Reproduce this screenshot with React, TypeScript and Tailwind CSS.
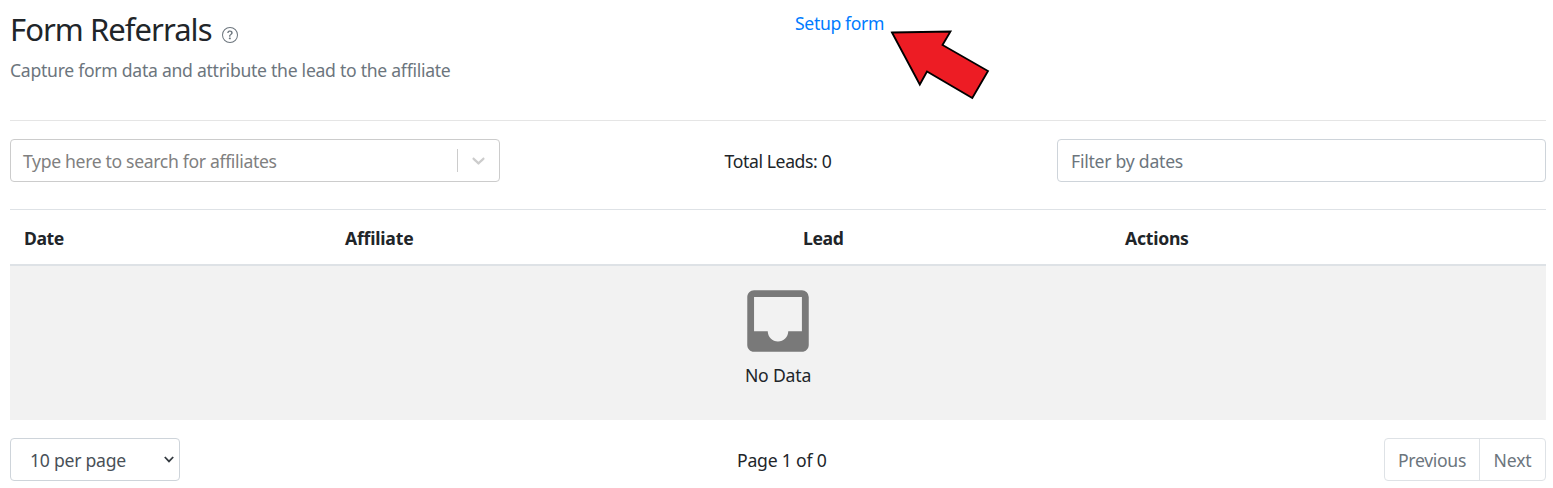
import { MdInbox } from "react-icons/md";

const columns = [
  { label: "Date", className: "w-[321px] tracking-[-0.45px]" },
  { label: "Affiliate", className: "w-[458px] tracking-[-0.2px]" },
  { label: "Lead", className: "w-[322px] tracking-[-0.4px]" },
  { label: "Actions", className: "flex-1 tracking-[-0.25px]" },
];

function HelpIcon() {
  return (
    <svg viewBox="0 0 16 16" className="mt-[17px] h-4 w-4 text-[#6c757d]" fill="currentColor">
      <path d="M8 15A7 7 0 1 1 8 1a7 7 0 0 1 0 14m0 1A8 8 0 1 0 8 0a8 8 0 0 0 0 16" />
      <path d="M5.255 5.786a.237.237 0 0 0 .241.247h.825c.138 0 .248-.113.266-.25.09-.656.54-1.134 1.342-1.134.686 0 1.314.343 1.314 1.168 0 .635-.374.927-.965 1.371-.673.489-1.206 1.06-1.168 1.987l.003.217a.25.25 0 0 0 .25.246h.811a.25.25 0 0 0 .25-.25v-.105c0-.718.273-.927 1.01-1.486.609-.463 1.244-.977 1.244-2.056 0-1.511-1.276-2.241-2.673-2.241-1.267 0-2.655.59-2.75 2.286m1.557 5.763c0 .533.425.927 1.01.927.609 0 1.028-.394 1.028-.927 0-.552-.42-.94-1.029-.94-.584 0-1.009.388-1.009.94" />
    </svg>
  );
}

function Arrow() {
  return (
    <svg className="absolute left-[885px] top-[25px]" width="110" height="80" viewBox="885 25 110 80">
      <path d="M892 32.5 950.5 31.5 942.5 45 988 71 972.3 98 927 71.5 919.8 84.5Z" fill="#ed1c24" stroke="#000" strokeWidth="1.8" />
    </svg>
  );
}

export default function App() {
  return (
    <div className="relative h-[488px] w-full overflow-hidden bg-white pl-[10px] pr-[7px] font-['Noto_Sans','Open_Sans',sans-serif] text-[17.6px] leading-[27px] text-[#212529]">
      <header className="flex h-[121px] border-b border-[#e5e5e5]">
        <div className="w-[785px]">
          <div className="flex h-[57px] items-start gap-[9px] pt-[10px]">
            <h1 className="w-[203px] whitespace-nowrap text-[31px] leading-[38px] tracking-[-0.95px]">Form Referrals</h1>
            <HelpIcon />
          </div>
          <p className="whitespace-nowrap tracking-[-0.28px] text-[#6c757d]">Capture form data and attribute the lead to the affiliate</p>
        </div>
        <a href="#setup" className="pt-[10px] tracking-[-0.35px] text-[#007bff]">Setup form</a>
      </header>
      <Arrow />

      <section className="flex items-start justify-between pt-[18px]">
        <div className="flex h-[43px] w-[490px] items-center rounded-[4px] border border-[#cccccc] pl-[12px]">
          <span className="flex-1 pt-[2px] tracking-[-0.34px] text-[#808080]">Type here to search for affiliates</span>
          <span className="h-[23px] w-px bg-[#cccccc]" />
          <svg className="mx-[10px] h-[21px] w-[21px]" viewBox="0 0 20 20" fill="#cccccc">
            <path d="M4.516 7.548c0.436-0.446 1.043-0.481 1.576 0l3.908 3.747 3.908-3.747c0.533-0.481 1.141-0.446 1.574 0 0.436 0.445 0.408 1.197 0 1.615-0.406 0.418-4.695 4.502-4.695 4.502-0.217 0.223-0.502 0.335-0.787 0.335s-0.57-0.112-0.789-0.335c0 0-4.287-4.084-4.695-4.502s-0.436-1.17 0-1.615z" />
          </svg>
        </div>
        <p className="mt-[9px] w-[108px] whitespace-nowrap tracking-[-0.38px]">Total Leads: 0</p>
        <input aria-label="Dates" placeholder="Filter by dates" className="h-[43px] w-[489px] rounded-[4px] border border-[#ced4da] px-[13px] tracking-[-0.25px] outline-none placeholder:text-[#6c757d]" />
      </section>

      <section className="mt-[27px] border-t border-[#dee2e6]">
        <div className="flex h-[56px] items-center border-b-2 border-[#dee2e6] pl-[14px] pt-[2px] font-bold">
          {columns.map((column) => (
            <div key={column.label} className={column.className}>{column.label}</div>
          ))}
        </div>
        <div className="flex h-[154px] flex-col items-center bg-[#f2f2f2] pt-[14px]">
          <MdInbox className="h-[82px] w-[82px] text-[#797979]" />
          <p className="whitespace-nowrap tracking-[-0.2px]">No Data</p>
        </div>
      </section>

      <footer className="mt-[18px] flex h-[43px]">
        <button className="flex h-[43px] w-[170px] items-center justify-between rounded-[4px] border border-[#ced4da] pl-[19px] pr-[5px] text-[#495057]">
          <span className="pt-[2px] tracking-[-0.25px]">10 per page</span>
          <svg width="10" height="8" viewBox="0 0 10 8" fill="none" stroke="#343a40" strokeWidth="1.8">
            <path d="M.8 1 5 5.4 9.2 1" />
          </svg>
        </button>
        <p className="ml-[557px] mt-[9px] w-[90px] whitespace-nowrap tracking-[-0.2px]">Page 1 of 0</p>
        <nav className="ml-auto flex h-[43px] w-[162px] rounded-[4px] border border-[#dee2e6] text-[#6c757d]">
          <button className="w-[95px] whitespace-nowrap border-r border-[#dee2e6] pt-[2px] tracking-[-0.3px]">Previous</button>
          <button className="flex-1 whitespace-nowrap pt-[2px] tracking-[-0.2px]">Next</button>
        </nav>
      </footer>
    </div>
  );
}
